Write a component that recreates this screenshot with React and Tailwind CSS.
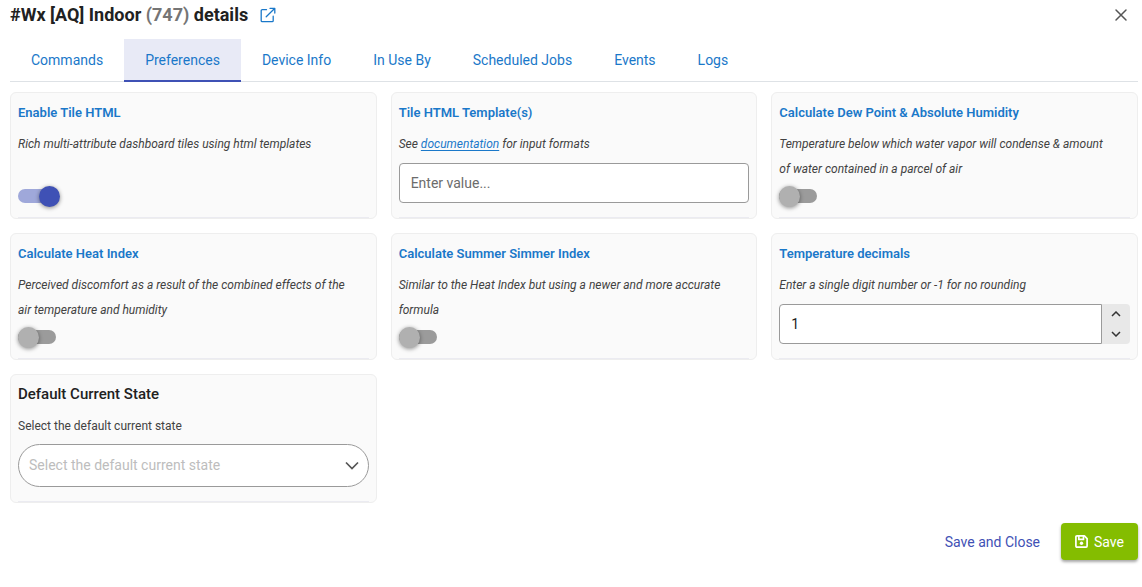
import { useState } from "react";

const tabs = ["Commands", "Preferences", "Device Info", "In Use By", "Scheduled Jobs", "Events", "Logs"];

function Card({ title, titleFor, children }) {
  return (
    <section className="flex flex-col rounded-md border border-[#eeeeee] bg-[#fafafa] px-[7px] pt-[7px]">
      <label htmlFor={titleFor} className="text-[13px] font-semibold leading-[25px] text-[#1a78c9]">
        {title}
      </label>
      {children}
      <div className="h-px bg-[#ebebf1]" />
    </section>
  );
}

function Description({ children }) {
  return <p className="mt-[7px] pr-4 text-xs leading-[25px] text-[#424242] italic">{children}</p>;
}

function ToggleCard({ id, title, description, defaultChecked = false }) {
  return (
    <Card title={title} titleFor={id}>
      <Description>{description}</Description>
      <div className="mt-auto pt-[7px] pb-[14px]">
        <input
          id={id}
          type="checkbox"
          role="switch"
          defaultChecked={defaultChecked}
          className="relative block h-[14px] w-[38px] cursor-pointer appearance-none rounded-full bg-[#9b9b9b] before:absolute before:-top-[3px] before:left-0 before:size-[21px] before:rounded-full before:bg-[#b0b0b0] before:shadow-[0_1px_4px_rgba(0,0,0,0.45)] before:content-[''] checked:bg-[#9fa8da] checked:before:left-[21px] checked:before:bg-[#3f51b5]"
        />
      </div>
    </Card>
  );
}

function StepIcon({ d }) {
  return (
    <svg width="10" height="6" viewBox="0 0 10 6" fill="none" stroke="#333" strokeWidth="1.5" aria-hidden="true">
      <path d={d} />
    </svg>
  );
}

export default function App() {
  const [active, setActive] = useState("Preferences");
  const [decimals, setDecimals] = useState(1);

  return (
    <main className="bg-white pr-1 pl-[10px] font-['Roboto',sans-serif] text-[#212121]">
      <header className="flex h-[30px] items-center justify-between pr-[10px]">
        <div className="flex items-center gap-3">
          <h1 className="text-lg leading-[30px] font-bold">
            #Wx [AQ] Indoor <span className="text-[#757575]">(747)</span> details
          </h1>
          <a href="#device" aria-label="Open device page" className="text-[#1a78c9]">
            <svg width="16" height="16" viewBox="0 0 16 16" fill="none" stroke="currentColor" strokeWidth="1.3" strokeLinecap="round" strokeLinejoin="round" aria-hidden="true">
              <path d="M6.5 2.7H2.2a1 1 0 0 0-1 1v10a1 1 0 0 0 1 1h10a1 1 0 0 0 1-1V9.2" />
              <path d="M10 1.3h4.8v4.8M14.6 1.5 6.2 9.8" />
            </svg>
          </a>
        </div>
        <button type="button" aria-label="Close" className="text-[#555]">
          <svg width="14" height="14" viewBox="0 0 14 14" fill="none" stroke="currentColor" strokeWidth="1.5" strokeLinecap="round" aria-hidden="true">
            <path d="m2 2 10 10M12 2 2 12" />
          </svg>
        </button>
      </header>

      <nav role="tablist" className="mt-[9px] flex border-b border-[#dee2e6]">
        {tabs.map((tab) => (
          <button
            key={tab}
            type="button"
            role="tab"
            aria-selected={active === tab}
            onClick={() => setActive(tab)}
            className={
              active === tab
                ? "-mb-px h-[43px] border-b-2 border-[#3f51b5] bg-[#e8eaf6] px-[21px] text-sm text-[#1a78c9]"
                : "-mb-px h-[43px] border-b-2 border-transparent px-[21px] text-sm text-[#1a78c9]"
            }
          >
            {tab}
          </button>
        ))}
      </nav>

      <div className="mt-[10px] grid grid-cols-3 gap-[14px]">
        <ToggleCard id="tile-html" title="Enable Tile HTML" description="Rich multi-attribute dashboard tiles using html templates" defaultChecked />

        <Card title="Tile HTML Template(s)" titleFor="template">
          <Description>
            See <a href="#documentation" className="text-[#1a78c9] underline underline-offset-2">documentation</a> for input formats
          </Description>
          <input
            id="template"
            type="text"
            placeholder="Enter value..."
            className="mt-[6px] mb-[14px] h-10 w-full rounded-[4px] border border-[#9a9a9a] bg-white px-[11px] text-sm placeholder:text-[#6c6c6c]"
          />
        </Card>

        <ToggleCard id="dew-point" title="Calculate Dew Point & Absolute Humidity" description="Temperature below which water vapor will condense & amount of water contained in a parcel of air" />
        <ToggleCard id="heat-index" title="Calculate Heat Index" description="Perceived discomfort as a result of the combined effects of the air temperature and humidity" />
        <ToggleCard id="simmer-index" title="Calculate Summer Simmer Index" description="Similar to the Heat Index but using a newer and more accurate formula" />

        <Card title="Temperature decimals" titleFor="decimals">
          <Description>Enter a single digit number or -1 for no rounding</Description>
          <div className="mt-[6px] mb-[14px] flex h-10">
            <input
              id="decimals"
              type="text"
              inputMode="numeric"
              value={decimals}
              onChange={(e) => setDecimals(e.target.value)}
              className="min-w-0 flex-1 rounded-l-[4px] border border-[#9a9a9a] bg-white px-[11px] text-sm"
            />
            <div className="flex w-7 flex-col overflow-hidden rounded-r-[4px] bg-[#e8e8e8]">
              <button type="button" aria-label="Increase" onClick={() => setDecimals(Number(decimals) + 1)} className="flex flex-1 items-center justify-center">
                <StepIcon d="M1 5l4-4 4 4" />
              </button>
              <button type="button" aria-label="Decrease" onClick={() => setDecimals(Number(decimals) - 1)} className="flex flex-1 items-center justify-center">
                <StepIcon d="M1 1l4 4 4-4" />
              </button>
            </div>
          </div>
        </Card>

        <section className="flex flex-col rounded-md border border-[#eeeeee] bg-[#fafafa] px-[7px] pt-[7px]">
          <h2 className="text-[15px] leading-[25px] font-medium">Default Current State</h2>
          <label htmlFor="state" className="mt-[7px] text-xs leading-[25px] text-[#424242]">
            Select the default current state
          </label>
          <div className="mt-[5px] mb-[14px] grid items-center">
            <select
              id="state"
              defaultValue=""
              className="col-start-1 row-start-1 h-[43px] w-full appearance-none rounded-full border border-[#9a9a9a] bg-white pr-8 pb-0.5 pl-[10px] text-sm text-[#bdbdbd]"
            >
              <option value="">Select the default current state</option>
            </select>
            <svg width="14" height="9" viewBox="0 0 14 9" fill="none" stroke="#555" strokeWidth="1.7" className="pointer-events-none col-start-1 row-start-1 mr-[10px] justify-self-end" aria-hidden="true">
              <path d="m1 1.5 6 6 6-6" />
            </svg>
          </div>
          <div className="h-px bg-[#ebebf1]" />
        </section>
      </div>

      <footer className="mt-5 flex items-center justify-end gap-[21px] pb-5">
        <button type="button" className="h-[37px] text-sm text-[#3f51b5]">Save and Close</button>
        <button type="button" className="flex h-[37px] items-center gap-[6px] rounded-[4px] bg-[#84bd00] px-[14px] text-sm text-white shadow-[0_2px_3px_rgba(0,0,0,0.35)]">
          <svg width="13" height="13" viewBox="0 0 13 13" fill="none" stroke="currentColor" strokeWidth="1.7" strokeLinejoin="round" aria-hidden="true">
            <path d="M1.9.9h7.5l2.7 2.7v7.5a1 1 0 0 1-1 1H1.9a1 1 0 0 1-1-1V1.9a1 1 0 0 1 1-1Z" />
            <path d="M3.8 1v3.4h4.7V1" />
            <circle cx="6.5" cy="8.3" r="1.7" fill="currentColor" stroke="none" />
          </svg>
          Save
        </button>
      </footer>
    </main>
  );
}
